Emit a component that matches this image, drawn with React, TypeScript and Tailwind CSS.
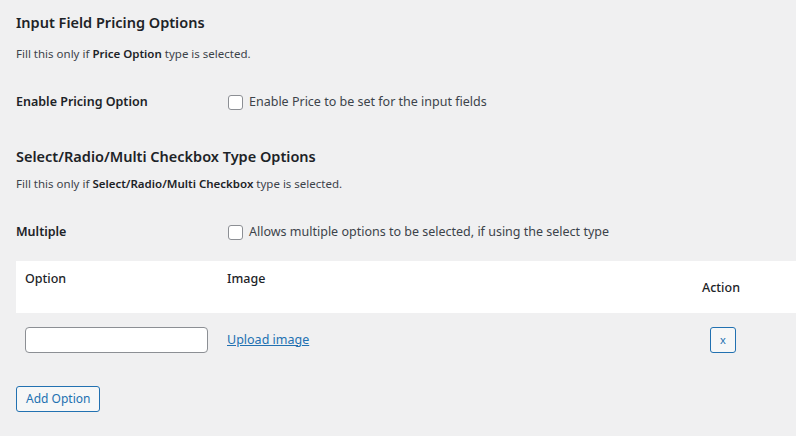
import React from 'react';

export default function App() {
  return (
    <div className="min-h-[436px] w-[796px] overflow-hidden bg-[#f0f0f1] pl-4 text-[#1d2327] text-[13px]" style={{ fontFamily: '"Noto Sans", sans-serif' }}>
      {/* Pricing */}
      <h2 className="pt-[11px] text-[14.5px] font-semibold leading-[22px]">Input Field Pricing Options</h2>
      <p className="mt-[13px] text-[11.5px] leading-[16px] text-[#3c434a]">Fill this only if <b className="font-semibold text-[#1d2327]">Price Option</b> type is selected.</p>
      <div className="mt-[30px] flex items-center h-[20px]">
        <div className="w-[212px] text-[12.5px] font-semibold">Enable Pricing Option</div>
        <label className="flex items-center gap-[6px] text-[12.5px] text-[#3c434a]">
          <span className="h-[15px] w-[15px] rounded-[3px] border border-[#8c8f94] bg-white" />
          Enable Price to be set for the input fields
        </label>
      </div>

      {/* Select/Radio */}
      <h2 className="mt-[33px] text-[14.5px] font-semibold leading-[22px]">Select/Radio/Multi Checkbox Type Options</h2>
      <p className="mt-[9px] text-[11.5px] leading-[16px] text-[#3c434a]">Fill this only if <b className="font-semibold text-[#1d2327]">Select/Radio/Multi Checkbox</b> type is selected.</p>
      <div className="mt-[30px] flex items-center h-[20px]">
        <div className="w-[212px] text-[12.5px] font-semibold">Multiple</div>
        <label className="flex items-center gap-[6px] text-[12.5px] text-[#3c434a]">
          <span className="h-[15px] w-[15px] rounded-[3px] border border-[#8c8f94] bg-white" />
          Allows multiple options to be selected, if using the select type
        </label>
      </div>

      {/* Options table */}
      <div className="mt-[19px] flex h-[52px] bg-white text-[12.5px] font-medium">
        <div className="w-[211px] pl-[9px] pt-[9px]">Option</div>
        <div className="w-[475px] pt-[9px]">Image</div>
        <div className="pt-[18px]">Action</div>
      </div>
      <div className="mt-[14px] flex h-[26px] items-center">
        <div className="w-[211px] pl-[9px]">
          <input className="h-[26px] w-[183px] rounded-[4px] border border-[#8c8f94] bg-white" />
        </div>
        <a href="#" className="w-[483px] text-[12.5px] text-[#2271b1] underline">Upload image</a>
        <button className="h-[26px] w-[26px] rounded-[3px] border border-[#2271b1] bg-[#f6f7f7] text-[11px] text-[#2271b1]">x</button>
      </div>
      <button className="mt-[33px] h-[26px] rounded-[3px] border border-[#2271b1] bg-[#f6f7f7] px-[9px] text-[12px] text-[#2271b1]">Add Option</button>
    </div>
  );
}
